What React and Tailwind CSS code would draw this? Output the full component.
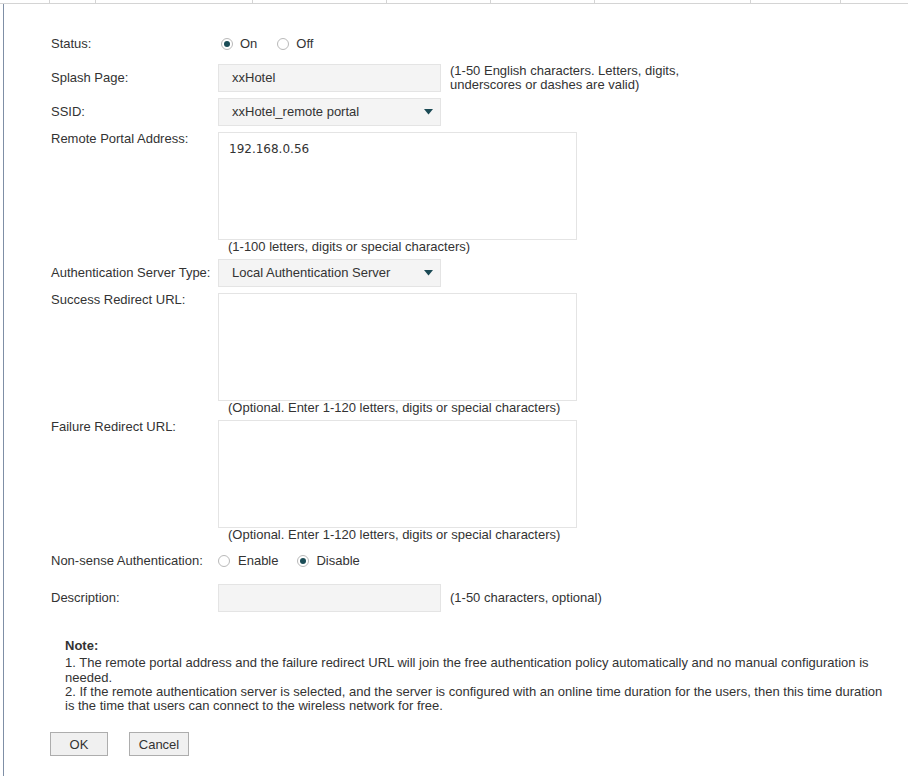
const dividers = [50, 46, 157, 134, 104, 104, 156, 90];

const labelCls = "w-[167px] shrink-0 text-[13px] text-[#333]";
const hintCls = "text-[13px] leading-[13px] text-[#333]";

function Radio({ checked }) {
  return (
    <span className="flex h-[12px] w-[12px] items-center justify-center rounded-full border border-[#b9b9b9] bg-white">
      {checked && <span className="h-[6px] w-[6px] rounded-full bg-[#1b4d57]" />}
    </span>
  );
}

function Caret() {
  return (
    <svg width="9" height="6" viewBox="0 0 9 6" className="shrink-0">
      <path d="M0 0 H9 L4.5 5.5 Z" fill="#1b4a55" />
    </svg>
  );
}

function Box({ children, select }) {
  return (
    <div className="flex h-[28px] w-[223px] items-center justify-between border border-[#e4e4e4] bg-[#f4f4f4] pl-[13px] pr-[7px] text-[13px] text-[#333]">
      <span>{children}</span>
      {select && <Caret />}
    </div>
  );
}

function Area({ value, hint }) {
  return (
    <div>
      <div className="h-[108px] w-[359px] border border-[#e4e4e4] bg-white pl-[10px] pt-[7px] font-['DejaVu_Sans',sans-serif] text-[12px] text-[#333]">
        {value}
      </div>
      <p className={`${hintCls} pl-[10px]`}>{hint}</p>
    </div>
  );
}

export default function App() {
  return (
    <div className="h-[776px] w-[908px] overflow-hidden bg-white font-['Liberation_Sans',Arial,sans-serif] text-[#333]">
      <div className="flex h-[4px] border-b border-[#d4d4d4]">
        {dividers.map((w, i) => (
          <div key={i} style={{ width: w }} className="shrink-0 border-r border-[#d4d4d4]" />
        ))}
      </div>

      <div className="ml-[3px] h-[772px] border-l border-[#7f8fa6] pl-[47px] pt-[26px]">
        <div className="flex h-[28px] items-center">
          <span className={labelCls}>Status:</span>
          <div className="ml-[3px] flex items-center text-[13px]">
            <Radio checked />
            <span className="ml-[7px]">On</span>
            <span className="ml-[20px]">
              <Radio />
            </span>
            <span className="ml-[7px]">Off</span>
          </div>
        </div>

        <div className="mt-[6px] flex items-center">
          <span className={labelCls}>Splash Page:</span>
          <Box>xxHotel</Box>
          <p className="ml-[9px] text-[13px] leading-[14px]">
            (1-50 English characters. Letters, digits,
            <br />
            underscores or dashes are valid)
          </p>
        </div>

        <div className="mt-[6px] flex items-center">
          <span className={labelCls}>SSID:</span>
          <Box select>xxHotel_remote portal</Box>
        </div>

        <div className="mt-[6px] flex items-start">
          <span className={`${labelCls} leading-[14px]`}>Remote Portal Address:</span>
          <Area value="192.168.0.56" hint="(1-100 letters, digits or special characters)" />
        </div>

        <div className="mt-[6px] flex items-center">
          <span className={labelCls}>Authentication Server Type:</span>
          <Box select>Local Authentication Server</Box>
        </div>

        <div className="mt-[6px] flex items-start">
          <span className={`${labelCls} leading-[14px]`}>Success Redirect URL:</span>
          <Area hint="(Optional. Enter 1-120 letters, digits or special characters)" />
        </div>

        <div className="mt-[6px] flex items-start">
          <span className={`${labelCls} leading-[14px]`}>Failure Redirect URL:</span>
          <Area hint="(Optional. Enter 1-120 letters, digits or special characters)" />
        </div>

        <div className="mt-[6px] flex h-[28px] items-center">
          <span className={labelCls}>Non-sense Authentication:</span>
          <div className="flex items-center text-[13px]">
            <Radio />
            <span className="ml-[8px]">Enable</span>
            <span className="ml-[19px]">
              <Radio checked />
            </span>
            <span className="ml-[7px]">Disable</span>
          </div>
        </div>

        <div className="mt-[9px] flex items-center">
          <span className={labelCls}>Description:</span>
          <Box />
          <p className="ml-[9px] text-[13px]">(1-50 characters, optional)</p>
        </div>

        <div className="mt-[27px] w-[840px] pl-[14px] text-[13px] leading-[14.3px]">
          <p className="mb-[3px] font-bold">Note:</p>
          <p>
            1. The remote portal address and the failure redirect URL will join the free authentication policy
            automatically and no manual configuration is needed.
          </p>
          <p>
            2. If the remote authentication server is selected, and the server is configured with an online time
            duration for the users, then this time duration is the time that users can connect to the wireless
            network for free.
          </p>
        </div>

        <div className="ml-[-1px] mt-[19px] flex gap-[21px] text-[13px]">
          <button className="h-[24px] w-[58px] border border-[#adadad] bg-[#f0f0f0]">OK</button>
          <button className="h-[24px] w-[60px] border border-[#adadad] bg-[#f0f0f0]">Cancel</button>
        </div>
      </div>
    </div>
  );
}
